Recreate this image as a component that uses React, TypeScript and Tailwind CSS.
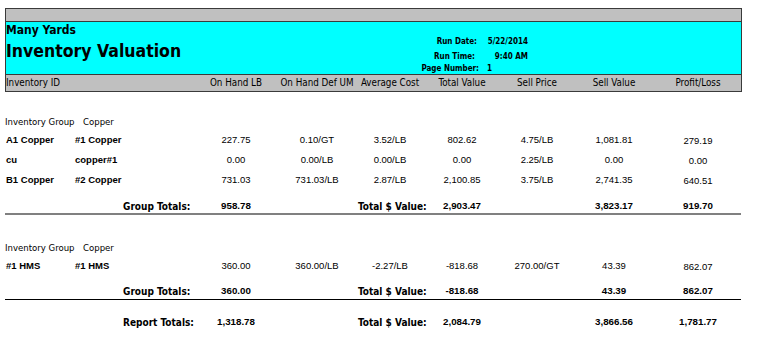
import React from "react";

const COLS = "grid grid-cols-[70px_121px_80px_82px_64px_80px_70px_84px_84px]";
const TAHOMA = "font-['DejaVu_Sans_Condensed','DejaVu_Sans',sans-serif]";
const ARIAL = "font-['Liberation_Sans',Arial,sans-serif]";

type Row = {
  id: string;
  desc: string;
  onHand: string;
  defUm: string;
  avg: string;
  total: string;
  sellPrice: string;
  sellValue: string;
  profit: string;
};

const group1: Row[] = [
  { id: "A1 Copper", desc: "#1 Copper", onHand: "227.75", defUm: "0.10/GT", avg: "3.52/LB", total: "802.62", sellPrice: "4.75/LB", sellValue: "1,081.81", profit: "279.19" },
  { id: "cu", desc: "copper#1", onHand: "0.00", defUm: "0.00/LB", avg: "0.00/LB", total: "0.00", sellPrice: "2.25/LB", sellValue: "0.00", profit: "0.00" },
  { id: "B1 Copper", desc: "#2 Copper", onHand: "731.03", defUm: "731.03/LB", avg: "2.87/LB", total: "2,100.85", sellPrice: "3.75/LB", sellValue: "2,741.35", profit: "640.51" },
];

const group2: Row[] = [
  { id: "#1 HMS", desc: "#1 HMS", onHand: "360.00", defUm: "360.00/LB", avg: "-2.27/LB", total: "-818.68", sellPrice: "270.00/GT", sellValue: "43.39", profit: "862.07" },
];

function DataRow({ r }: { r: Row }) {
  return (
    <div className={`${COLS} h-[20px] items-center text-[9.5px] text-black ${ARIAL}`}>
      <div className="pl-[1px] font-bold whitespace-nowrap">{r.id}</div>
      <div className="font-bold whitespace-nowrap">{r.desc}</div>
      <div className="text-center">{r.onHand}</div>
      <div className="text-center">{r.defUm}</div>
      <div className="text-center whitespace-nowrap">{r.avg}</div>
      <div className="text-center">{r.total}</div>
      <div className="text-center whitespace-nowrap">{r.sellPrice}</div>
      <div className="text-center">{r.sellValue}</div>
      <div className="text-center pt-[2px]">{r.profit}</div>
    </div>
  );
}

function GroupHeader() {
  return (
    <div className={`flex h-[14px] items-center text-[9.5px] text-black ${TAHOMA}`}>
      <span className="w-[78px]">Inventory Group</span>
      <span>Copper</span>
    </div>
  );
}

function TotalsRow({
  label,
  onHand,
  total,
  sellValue,
  profit,
}: {
  label: string;
  onHand: string;
  total: string;
  sellValue: string;
  profit: string;
}) {
  return (
    <div className={`${COLS} h-[14px] items-center text-[9.75px] text-black font-bold`}>
      <div />
      <div className={`pl-[48px] whitespace-nowrap text-[10px] ${TAHOMA}`}>{label}</div>
      <div className={`text-center ${ARIAL}`}>{onHand}</div>
      <div />
      <div className={`text-center whitespace-nowrap text-[10px] ${TAHOMA}`}>Total $ Value:</div>
      <div className={`text-center ${ARIAL}`}>{total}</div>
      <div />
      <div className={`text-center ${ARIAL}`}>{sellValue}</div>
      <div className={`text-center ${ARIAL}`}>{profit}</div>
    </div>
  );
}

export default function App() {
  return (
    <div className="w-[757px] h-[345px] bg-white pt-[8px] pl-[5px] overflow-hidden">
      <div className="w-[737px] border border-[#3a3a3a]">
        <div className="h-[13px] bg-[#c0c0c0] border-b border-[#3a3a3a]" />
        <div className={`h-[53px] bg-[#00ffff] border-b border-[#3a3a3a] flex text-black ${TAHOMA}`}>
          <div className="w-[414px] shrink-0">
            <div className="h-[13px] leading-[13px] text-[12px] font-bold mt-[2px]">Many Yards</div>
            <div className="h-[24px] leading-[24px] text-[17.5px] font-bold mt-[2px] whitespace-nowrap">
              Inventory Valuation
            </div>
          </div>
          <div className="pt-[14px] text-[8px] font-bold">
            <div className="grid grid-cols-[57px_51px] h-[12px] items-center">
              <span className="text-right whitespace-nowrap">Run Date:</span>
              <span className="text-right whitespace-nowrap">5/22/2014</span>
            </div>
            <div className="grid grid-cols-[55px_53px] h-[12px] items-center mt-[3px]">
              <span className="text-right whitespace-nowrap">Run Time:</span>
              <span className="text-right whitespace-nowrap">9:40 AM</span>
            </div>
            <div className="grid grid-cols-[59px_49px] h-[12px] items-center">
              <span className="text-right whitespace-nowrap">Page Number:</span>
              <span className="pl-[8px]">1</span>
            </div>
          </div>
        </div>
        <div
          className={`grid grid-cols-[69px_121px_80px_82px_64px_80px_70px_84px_84px] h-[16px] items-center bg-[#c0c0c0] text-[9.75px] text-black ${TAHOMA}`}
        >
          <div className="whitespace-nowrap">Inventory ID</div>
          <div />
          <div className="text-center whitespace-nowrap">On Hand LB</div>
          <div className="text-center whitespace-nowrap">On Hand Def UM</div>
          <div className="text-center whitespace-nowrap">Average Cost</div>
          <div className="text-center whitespace-nowrap">Total Value</div>
          <div className="text-center whitespace-nowrap">Sell Price</div>
          <div className="text-center whitespace-nowrap">Sell Value</div>
          <div className="text-center whitespace-nowrap">Profit/Loss</div>
        </div>
      </div>

      <div className="mt-[23px]">
        <GroupHeader />
        <div className="mt-[1px]">
          {group1.map((r) => (
            <DataRow key={r.id} r={r} />
          ))}
        </div>
        <div className="mt-[9px]">
          <TotalsRow label="Group Totals:" onHand="958.78" total="2,903.47" sellValue="3,823.17" profit="919.70" />
        </div>
        <div className="w-[736px] h-[2px] bg-[#808080]" />

        <div className="mt-[26px]">
          <GroupHeader />
        </div>
        <div className="mt-[1px]">
          {group2.map((r) => (
            <DataRow key={r.id} r={r} />
          ))}
        </div>
        <div className="mt-[8px]">
          <TotalsRow label="Group Totals:" onHand="360.00" total="-818.68" sellValue="43.39" profit="862.07" />
        </div>
        <div className="w-[736px] h-[1px] mt-[1px] bg-black" />
        <div className="mt-[15px]">
          <TotalsRow label="Report Totals:" onHand="1,318.78" total="2,084.79" sellValue="3,866.56" profit="1,781.77" />
        </div>
      </div>
    </div>
  );
}
